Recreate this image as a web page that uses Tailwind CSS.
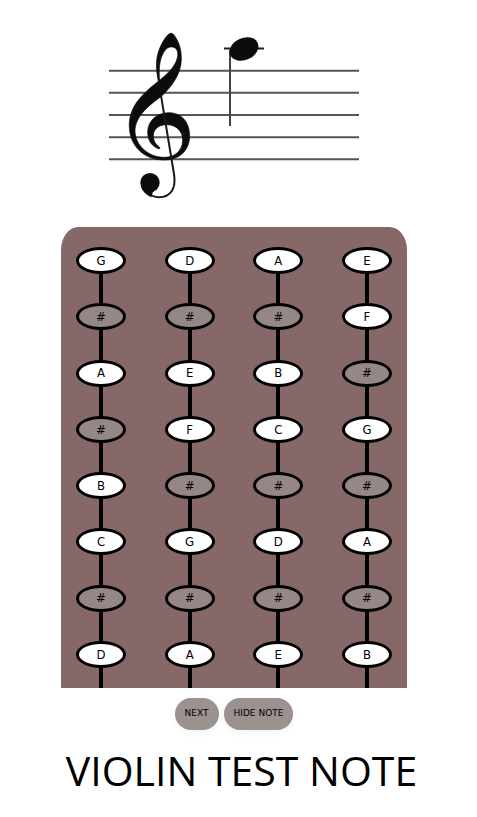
<!DOCTYPE html>
<html lang="en">
<head>
  <meta charset="UTF-8">
  <meta name="viewport" content="width=device-width, initial-scale=1.0">
  <title>Violin Test Note</title>
  <script src="https://cdn.jsdelivr.net/npm/@tailwindcss/browser@4"></script>
</head>
<body class="bg-white min-h-screen text-black">
  <main class="flex flex-col items-center pr-[9px]">
    <!-- Staff with the note to guess -->
    <svg class="w-[250px] h-[227px]" viewBox="0 0 250 227" fill="none" role="img" aria-label="Note on the staff">
      <g stroke="#555" stroke-width="2">
        <path d="M0 70.7H250M0 92.8H250M0 115H250M0 137.2H250M0 159.3H250"/>
      </g>
      <!-- Treble clef -->
      <g transform="translate(-9 20) scale(.3333)">
        <path fill="#0c0c0c" stroke="#0c0c0c" stroke-width="2" fill-rule="evenodd" d="M212 40C202 40 184 70 176 93C167 118 168 150 175 184C145 207 118 232 103 258C91 280 87 300 88 322C90 378 132 420 192 420C240 420 269 390 269 347C269 304 242 277 205 278C168 279 143 304 143 337C143 364 158 381 178 387L180 383C165 372 159 359 160 345C162 326 178 314 200 314C230 314 249 335 248 363C246 395 222 413 190 412C144 411 106 375 105 334C105 292 142 259 183 230C218 198 243 160 244 120C245 85 235 62 222 45C219 41 215 40 212 40ZM179 181C176 150 178 120 190 99C198 84 208 80 217 81C232 82 237 100 231 117C223 143 202 161 179 181Z"/>
        <path stroke="#1a1a1a" stroke-width="6" d="M183 226L222 462C229 505 213 532 176 532C158 531 148 525 141 512"/>
        <circle cx="150" cy="488" r="29" fill="#0c0c0c"/>
        <path fill="#0c0c0c" d="M122 498C127 514 138 525 154 532L160 512Z"/>
      </g>
      <!-- Note head, ledger line and stem -->
      <path stroke="#222" stroke-width="2" d="M115 48.5H155"/>
      <path stroke="#444" stroke-width="2" d="M121 50V126"/>
      <ellipse cx="135" cy="49" rx="15" ry="11" transform="rotate(-24 135 49)" fill="#0c0c0c"/>
    </svg>

    <!-- Fingerboard -->
    <div class="w-[346px] h-[461px] px-[15px] flex justify-between bg-[#866868] rounded-t-[5%] font-['DejaVu_Sans_Condensed','DejaVu_Sans',sans-serif] text-[13px]">
      <div class="relative flex flex-col justify-between py-5">
        <div class="absolute top-6 bottom-0 left-[23px] w-1 bg-black"></div>
        <button class="relative w-[50px] h-[27px] rounded-[50%] border-3 border-black bg-white">G</button>
        <button class="relative w-[50px] h-[27px] rounded-[50%] border-3 border-black bg-[#968787]">#</button>
        <button class="relative w-[50px] h-[27px] rounded-[50%] border-3 border-black bg-white">A</button>
        <button class="relative w-[50px] h-[27px] rounded-[50%] border-3 border-black bg-[#968787]">#</button>
        <button class="relative w-[50px] h-[27px] rounded-[50%] border-3 border-black bg-white">B</button>
        <button class="relative w-[50px] h-[27px] rounded-[50%] border-3 border-black bg-white">C</button>
        <button class="relative w-[50px] h-[27px] rounded-[50%] border-3 border-black bg-[#968787]">#</button>
        <button class="relative w-[50px] h-[27px] rounded-[50%] border-3 border-black bg-white">D</button>
      </div>
      <div class="relative flex flex-col justify-between py-5">
        <div class="absolute top-6 bottom-0 left-[23px] w-1 bg-black"></div>
        <button class="relative w-[50px] h-[27px] rounded-[50%] border-3 border-black bg-white">D</button>
        <button class="relative w-[50px] h-[27px] rounded-[50%] border-3 border-black bg-[#968787]">#</button>
        <button class="relative w-[50px] h-[27px] rounded-[50%] border-3 border-black bg-white">E</button>
        <button class="relative w-[50px] h-[27px] rounded-[50%] border-3 border-black bg-white">F</button>
        <button class="relative w-[50px] h-[27px] rounded-[50%] border-3 border-black bg-[#968787]">#</button>
        <button class="relative w-[50px] h-[27px] rounded-[50%] border-3 border-black bg-white">G</button>
        <button class="relative w-[50px] h-[27px] rounded-[50%] border-3 border-black bg-[#968787]">#</button>
        <button class="relative w-[50px] h-[27px] rounded-[50%] border-3 border-black bg-white">A</button>
      </div>
      <div class="relative flex flex-col justify-between py-5">
        <div class="absolute top-6 bottom-0 left-[23px] w-1 bg-black"></div>
        <button class="relative w-[50px] h-[27px] rounded-[50%] border-3 border-black bg-white">A</button>
        <button class="relative w-[50px] h-[27px] rounded-[50%] border-3 border-black bg-[#968787]">#</button>
        <button class="relative w-[50px] h-[27px] rounded-[50%] border-3 border-black bg-white">B</button>
        <button class="relative w-[50px] h-[27px] rounded-[50%] border-3 border-black bg-white">C</button>
        <button class="relative w-[50px] h-[27px] rounded-[50%] border-3 border-black bg-[#968787]">#</button>
        <button class="relative w-[50px] h-[27px] rounded-[50%] border-3 border-black bg-white">D</button>
        <button class="relative w-[50px] h-[27px] rounded-[50%] border-3 border-black bg-[#968787]">#</button>
        <button class="relative w-[50px] h-[27px] rounded-[50%] border-3 border-black bg-white">E</button>
      </div>
      <div class="relative flex flex-col justify-between py-5">
        <div class="absolute top-6 bottom-0 left-[23px] w-1 bg-black"></div>
        <button class="relative w-[50px] h-[27px] rounded-[50%] border-3 border-black bg-white">E</button>
        <button class="relative w-[50px] h-[27px] rounded-[50%] border-3 border-black bg-white">F</button>
        <button class="relative w-[50px] h-[27px] rounded-[50%] border-3 border-black bg-[#968787]">#</button>
        <button class="relative w-[50px] h-[27px] rounded-[50%] border-3 border-black bg-white">G</button>
        <button class="relative w-[50px] h-[27px] rounded-[50%] border-3 border-black bg-[#968787]">#</button>
        <button class="relative w-[50px] h-[27px] rounded-[50%] border-3 border-black bg-white">A</button>
        <button class="relative w-[50px] h-[27px] rounded-[50%] border-3 border-black bg-[#968787]">#</button>
        <button class="relative w-[50px] h-[27px] rounded-[50%] border-3 border-black bg-white">B</button>
      </div>
    </div>

    <!-- Controls -->
    <div class="mt-2.5 flex gap-[5px] font-['DejaVu_Sans',sans-serif] text-[9px]">
      <button class="h-8 px-2.5 rounded-full bg-[#9b918f] shadow-[0_2px_8px_rgba(0,0,0,0.05)]">NEXT</button>
      <button class="h-8 px-2.5 rounded-full bg-[#9b918f] shadow-[0_2px_8px_rgba(0,0,0,0.05)]">HIDE NOTE</button>
    </div>
  </main>

  <h1 class="mt-4 pl-1.5 text-center font-['Open_Sans',sans-serif] font-medium text-[41px] leading-12">VIOLIN TEST NOTE</h1>
</body>
</html>
